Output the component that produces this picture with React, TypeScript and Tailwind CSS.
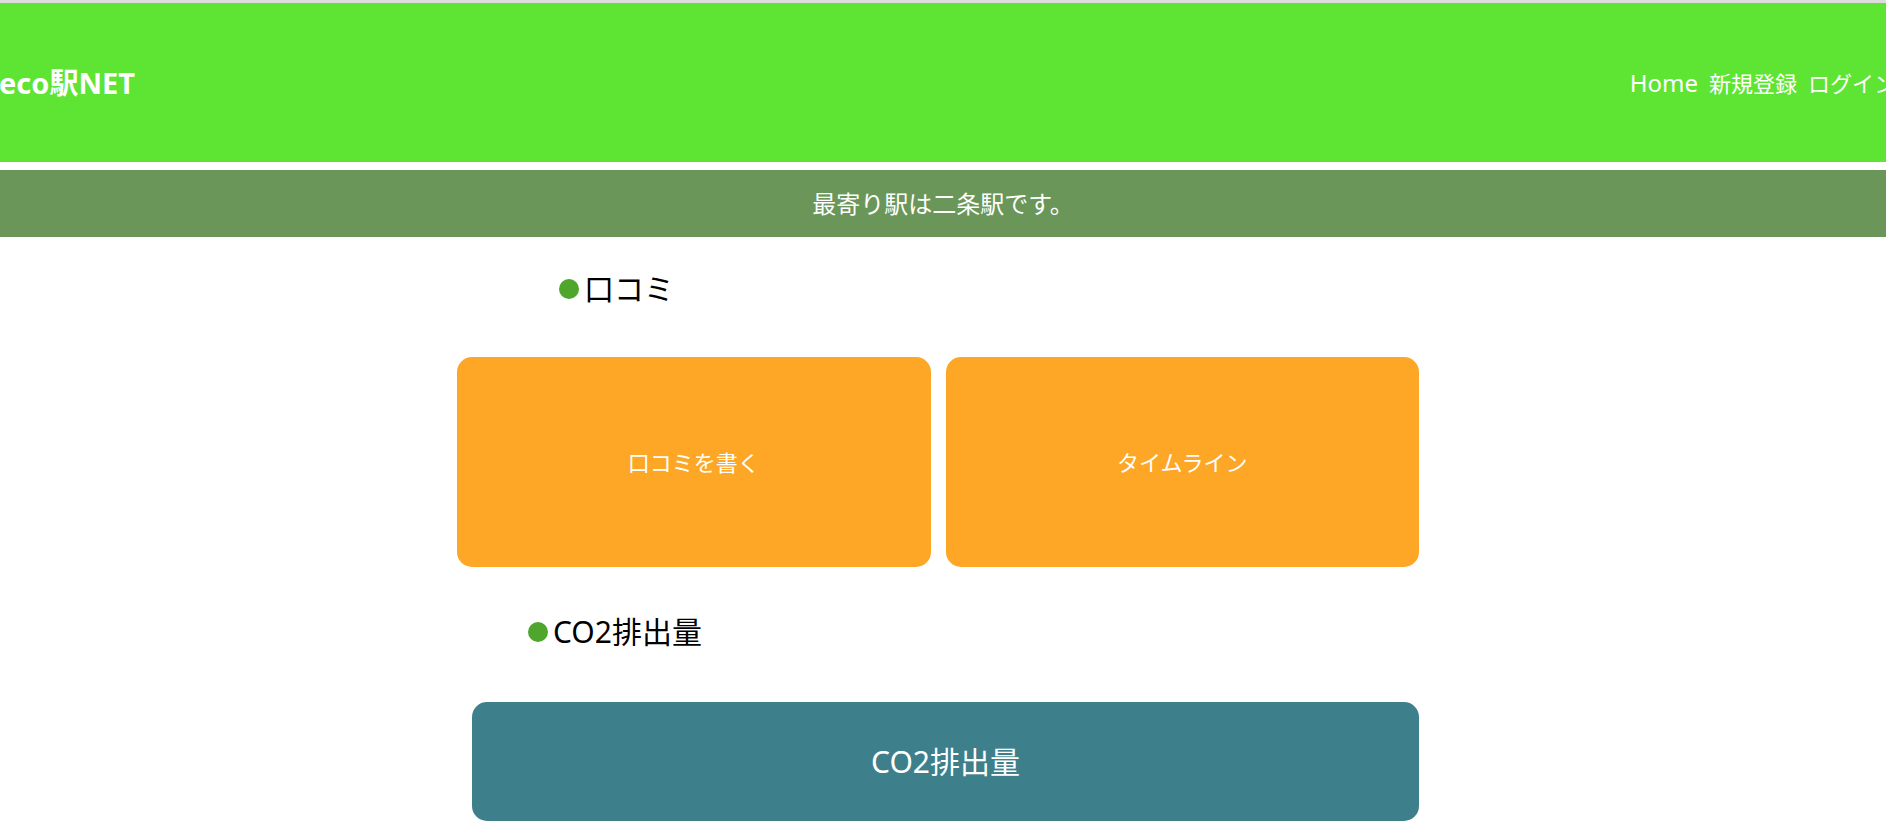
const font = { fontFamily: '"Noto Sans", "Noto Sans CJK JP", sans-serif' };

function Heading({ label, indent }: { label: string; indent: string }) {
  return (
    <div className={`flex h-[34px] items-center ${indent}`}>
      <span className="mr-[5px] h-[20px] w-[20px] rounded-full bg-[#4ea72c]"></span>
      <span className="text-[30px] leading-none text-black">{label}</span>
    </div>
  );
}

export default function App() {
  return (
    <div className="h-[824px] w-full overflow-hidden bg-white" style={font}>
      <div className="h-[3px] bg-[#dcdcdc]"></div>

      <header className="flex h-[159px] items-center bg-[#5ee432] text-white">
        <span className="-ml-[1px] text-[29px] font-bold leading-none">eco駅NET</span>
        <nav className="-mr-[10px] ml-auto flex shrink-0 items-center gap-[11px] text-[22px] leading-none">
          <span className="text-[24px]">Home</span>
          <span>新規登録</span>
          <span>ログイン</span>
        </nav>
      </header>

      <div className="mt-[8px] flex h-[67px] items-center justify-center bg-[#6a9659] text-[24px] text-white">
        最寄り駅は二条駅です。
      </div>

      <main className="ml-[457px] w-[962px]">
        <div className="mt-[35px]">
          <Heading label="口コミ" indent="pl-[102px]" />
        </div>

        <div className="mt-[51px] grid grid-cols-2 gap-[15px]">
          <div className="flex h-[210px] items-center justify-center rounded-[15px] bg-[#fea626] text-[22px] text-white">
            口コミを書く
          </div>
          <div className="flex h-[210px] items-center justify-center rounded-[15px] bg-[#fea626] text-[22px] text-white">
            タイムライン
          </div>
        </div>

        <div className="mt-[48px]">
          <Heading label="CO2排出量" indent="pl-[71px]" />
        </div>

        <div className="ml-[15px] mt-[53px] flex h-[119px] w-[947px] items-center justify-center rounded-[15px] bg-[#3e7f8c] text-[30px] text-white">
          CO2排出量
        </div>
      </main>
    </div>
  );
}
